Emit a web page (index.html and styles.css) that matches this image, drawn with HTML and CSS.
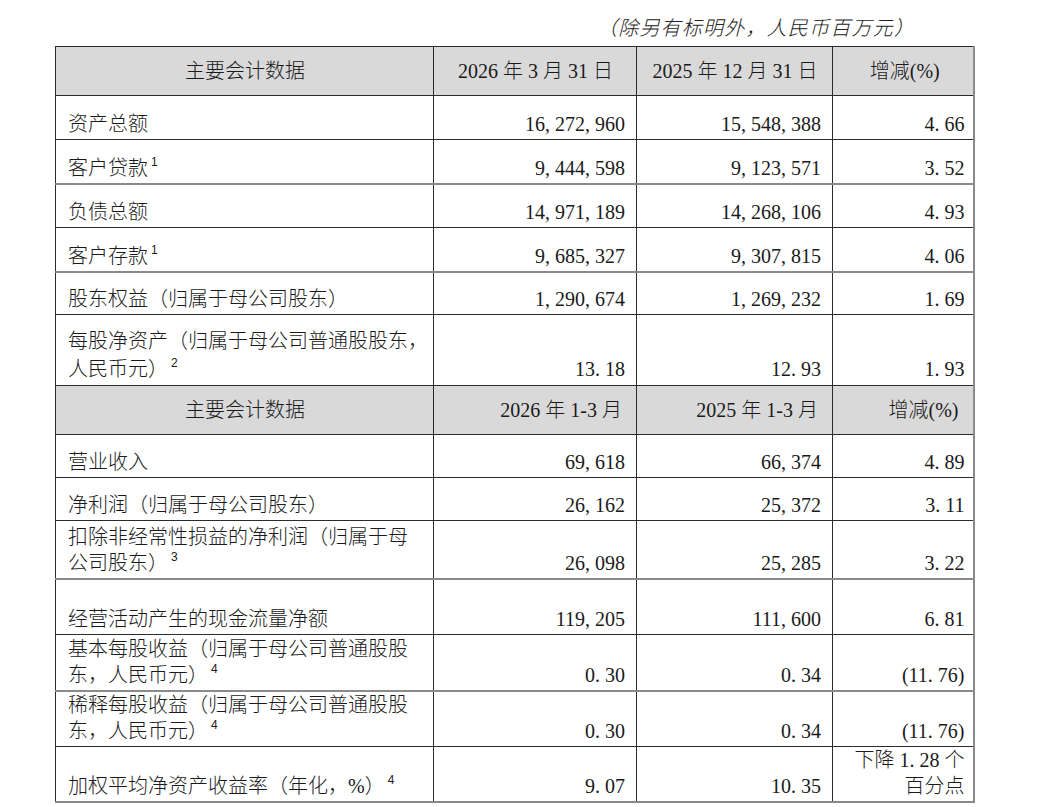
FILE: index.html
```html
<!DOCTYPE html>
<html lang="zh-CN">
<head>
<meta charset="utf-8">
<title>主要会计数据</title>
<link rel="stylesheet" href="styles.css">
</head>
<body>
<div class="page">
  <div class="caption">（除另有标明外，人民币百万元）</div>
  <table class="data">
    <colgroup>
      <col class="c1"><col class="c2"><col class="c3"><col class="c4">
    </colgroup>
    <tbody>
      <tr class="hd">
        <td class="ctr">主要会计数据</td>
        <td class="ctr">2026 年 3 月 31 日</td>
        <td class="ctr">2025 年 12 月 31 日</td>
        <td class="ctr">增减(%)</td>
      </tr>
      <tr class="r44">
        <td class="lbl">资产总额</td>
        <td class="num">16<i class="p">,</i>272<i class="p">,</i>960</td>
        <td class="num">15<i class="p">,</i>548<i class="p">,</i>388</td>
        <td class="num">4<i class="p">.</i>66</td>
      </tr>
      <tr class="r44 g">
        <td class="lbl">客户贷款<sup>1</sup></td>
        <td class="num">9<i class="p">,</i>444<i class="p">,</i>598</td>
        <td class="num">9<i class="p">,</i>123<i class="p">,</i>571</td>
        <td class="num">3<i class="p">.</i>52</td>
      </tr>
      <tr class="r44">
        <td class="lbl">负债总额</td>
        <td class="num">14<i class="p">,</i>971<i class="p">,</i>189</td>
        <td class="num">14<i class="p">,</i>268<i class="p">,</i>106</td>
        <td class="num">4<i class="p">.</i>93</td>
      </tr>
      <tr class="r44 g">
        <td class="lbl">客户存款<sup>1</sup></td>
        <td class="num">9<i class="p">,</i>685<i class="p">,</i>327</td>
        <td class="num">9<i class="p">,</i>307<i class="p">,</i>815</td>
        <td class="num">4<i class="p">.</i>06</td>
      </tr>
      <tr class="r43">
        <td class="lbl">股东权益（归属于母公司股东）</td>
        <td class="num">1<i class="p">,</i>290<i class="p">,</i>674</td>
        <td class="num">1<i class="p">,</i>269<i class="p">,</i>232</td>
        <td class="num">1<i class="p">.</i>69</td>
      </tr>
      <tr class="r71 tall">
        <td class="lbl">每股净资产（归属于母公司普通股股东，<br>人民币元）<sup>2</sup></td>
        <td class="num">13<i class="p">.</i>18</td>
        <td class="num">12<i class="p">.</i>93</td>
        <td class="num">1<i class="p">.</i>93</td>
      </tr>
      <tr class="hd">
        <td class="ctr">主要会计数据</td>
        <td class="rt">2026 年 1-3 月</td>
        <td class="rt">2025 年 1-3 月</td>
        <td class="rt">增减(%)</td>
      </tr>
      <tr class="r43">
        <td class="lbl">营业收入</td>
        <td class="num">69<i class="p">,</i>618</td>
        <td class="num">66<i class="p">,</i>374</td>
        <td class="num">4<i class="p">.</i>89</td>
      </tr>
      <tr class="r43">
        <td class="lbl">净利润（归属于母公司股东）</td>
        <td class="num">26<i class="p">,</i>162</td>
        <td class="num">25<i class="p">,</i>372</td>
        <td class="num">3<i class="p">.</i>11</td>
      </tr>
      <tr class="r58 g">
        <td class="lbl">扣除非经常性损益的净利润（归属于母<br>公司股东）<sup>3</sup></td>
        <td class="num">26<i class="p">,</i>098</td>
        <td class="num">25<i class="p">,</i>285</td>
        <td class="num">3<i class="p">.</i>22</td>
      </tr>
      <tr class="r56">
        <td class="lbl">经营活动产生的现金流量净额</td>
        <td class="num">119<i class="p">,</i>205</td>
        <td class="num">111<i class="p">,</i>600</td>
        <td class="num">6<i class="p">.</i>81</td>
      </tr>
      <tr class="r56 g">
        <td class="lbl">基本每股收益（归属于母公司普通股股<br>东，人民币元）<sup>4</sup></td>
        <td class="num">0<i class="p">.</i>30</td>
        <td class="num">0<i class="p">.</i>34</td>
        <td class="num">(11<i class="p">.</i>76)</td>
      </tr>
      <tr class="r54">
        <td class="lbl">稀释每股收益（归属于母公司普通股股<br>东，人民币元）<sup>4</sup></td>
        <td class="num">0<i class="p">.</i>30</td>
        <td class="num">0<i class="p">.</i>34</td>
        <td class="num">(11<i class="p">.</i>76)</td>
      </tr>
      <tr class="r56 g">
        <td class="lbl">加权平均净资产收益率（年化，%）<sup>4</sup></td>
        <td class="num">9<i class="p">.</i>07</td>
        <td class="num">10<i class="p">.</i>35</td>
        <td class="num wrap">下降 1<i class="p">.</i>28 个<br>百分点</td>
      </tr>
    </tbody>
  </table>
  <div class="note">注：</div>
</div>
</body>
</html>
```

FILE: styles.css
```css
html, body {
  margin: 0;
  padding: 0;
  background: #ffffff;
}

body {
  font-family: "Liberation Serif", "Noto Sans CJK SC", serif;
  font-size: 20px;
  font-weight: 300;
  color: #1a1a1a;
}

.page {
  padding: 14px 0 0 55px;
  width: 920px;
}

.caption {
  font-style: italic;
  text-align: right;
  line-height: 28px;
  height: 28px;
  padding-right: 60px;
  letter-spacing: 1.2px;
  color: #222;
}

.data {
  margin-top: 4px;
  border-collapse: collapse;
  table-layout: fixed;
  width: 918px;
}

.c1 { width: 378px; }
.c2 { width: 203px; }
.c3 { width: 196px; }
.c4 { width: 141px; }

.data td {
  border: 1px solid #2b2b2b;
  line-height: 26px;
  vertical-align: bottom;
  padding: 0 11px 2px 12px;
  white-space: nowrap;
}

.data td:last-child {
  padding-right: 8px;
  border-right: 2px solid #8a8a8a;
}

.data tr.g td {
  border-bottom: 2px solid #8a8a8a;
}

.data tr:last-child td {
  border-bottom: 2px solid #8a8a8a;
}

.data tr.tall td {
  line-height: 28px;
}

.data tr.hd td {
  background: #d9d9d9;
  height: 48px;
  vertical-align: middle;
  padding-bottom: 0;
}

.data tr.hd td.rt {
  padding-right: 14px;
}

.r43 { height: 43px; }
.r44 { height: 44px; }
.r54 { height: 54px; }
.r56 { height: 56px; }
.r58 { height: 58px; }
.r71 { height: 71px; }

.ctr { text-align: center; }
.rt { text-align: right; }
.num { text-align: right; }

.data td.lbl {
  text-align: left;
  padding-right: 4px;
}

.p {
  font-style: normal;
  display: inline-block;
  width: 10px;
  text-align: left;
}

sup {
  font-family: "Liberation Sans", sans-serif;
  font-size: 12px;
  line-height: 0;
  vertical-align: 9px;
  margin-left: 3px;
}

.note {
  padding-left: 20px;
  line-height: 28px;
  margin-top: 1px;
}
```
